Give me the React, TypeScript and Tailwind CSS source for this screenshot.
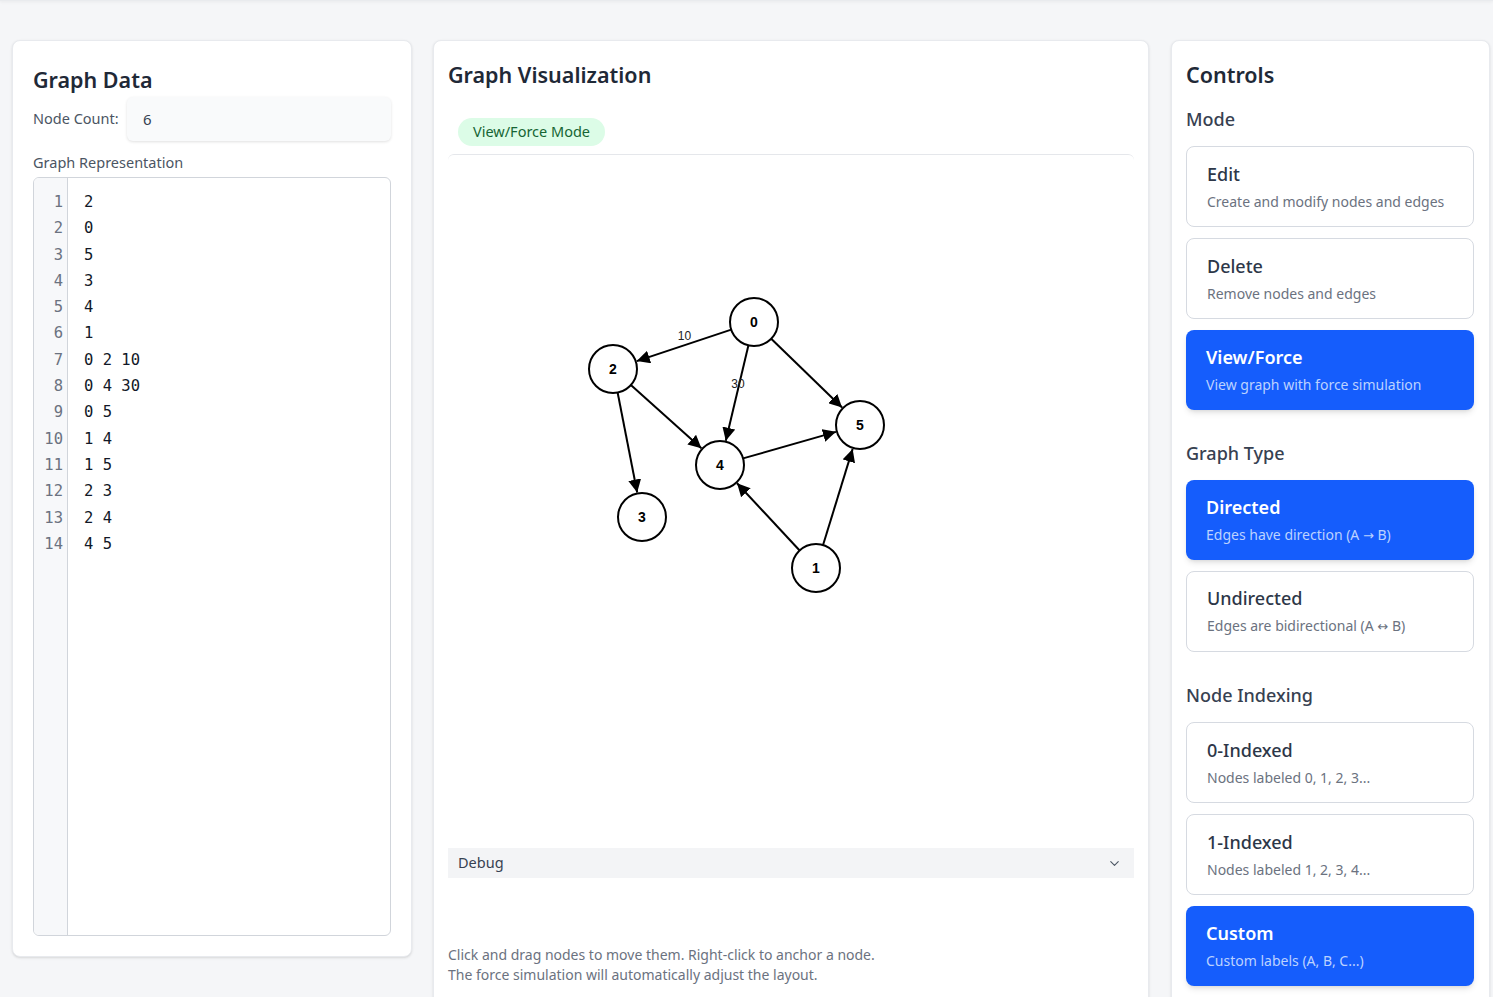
import React from "react";
import { ChevronDown } from "lucide-react";

const lines = ["2", "0", "5", "3", "4", "1", "0 2 10", "0 4 30", "0 5", "1 4", "1 5", "2 3", "2 4", "4 5"];

const nodes: Record<string, [number, number]> = {
  "0": [306, 167],
  "1": [368, 413],
  "2": [165, 214],
  "3": [194, 362],
  "4": [272, 310],
  "5": [412, 270],
};

const edges: { s: string; t: string; w?: string }[] = [
  { s: "0", t: "2", w: "10" },
  { s: "0", t: "4", w: "30" },
  { s: "0", t: "5" },
  { s: "1", t: "4" },
  { s: "1", t: "5" },
  { s: "2", t: "3" },
  { s: "2", t: "4" },
  { s: "4", t: "5" },
];

const R = 24;

function Graph() {
  return (
    <svg width="685" height="692" viewBox="0 0 685 692" className="block">
      <defs>
        <marker id="arrow" viewBox="0 0 10 10" refX="10" refY="5" markerWidth="13" markerHeight="13" markerUnits="userSpaceOnUse" orient="auto">
          <path d="M0,0 L10,5 L0,10 z" fill="#000" />
        </marker>
      </defs>
      {edges.map((e, i) => {
        const [x1, y1] = nodes[e.s];
        const [x2, y2] = nodes[e.t];
        const dx = x2 - x1;
        const dy = y2 - y1;
        const d = Math.sqrt(dx * dx + dy * dy);
        const ux = dx / d;
        const uy = dy / d;
        const sx = x1 + ux * R;
        const sy = y1 + uy * R;
        const ex = x2 - ux * (R + 1);
        const ey = y2 - uy * (R + 1);
        return (
          <g key={i}>
            <line x1={sx} y1={sy} x2={ex} y2={ey} stroke="#000" strokeWidth="2" markerEnd="url(#arrow)" />
            {e.w && (
              <text x={(x1 + x2) / 2 + 1} y={(y1 + y2) / 2 - 6} textAnchor="middle" fontSize="12" fill="#222" style={{ fontFamily: "'Liberation Sans', Arial, sans-serif" }}>
                {e.w}
              </text>
            )}
          </g>
        );
      })}
      {Object.entries(nodes).map(([id, [x, y]]) => (
        <g key={id}>
          <circle cx={x} cy={y} r={R} fill="#fff" stroke="#000" strokeWidth="2" />
          <text x={x} y={y + 5} textAnchor="middle" fontSize="14" fontWeight="bold" fill="#000" style={{ fontFamily: "'Liberation Sans', Arial, sans-serif" }}>
            {id}
          </text>
        </g>
      ))}
    </svg>
  );
}

function Desc({ text }: { text: string }) {
  const parts = text.split(/(→|↔)/);
  return (
    <>
      {parts.map((p, i) =>
        p === "→" || p === "↔" ? (
          <span key={i} style={{ fontFamily: "'DejaVu Sans', sans-serif" }} className="text-[13px]">
            {p}
          </span>
        ) : (
          <React.Fragment key={i}>{p}</React.Fragment>
        )
      )}
    </>
  );
}

function Card({ title, desc, active }: { title: string; desc: string; active?: boolean }) {
  return active ? (
    <div className="h-[80px] rounded-lg bg-[#155dfc] shadow-md px-5 flex flex-col justify-center">
      <div className="text-[18px] leading-[26px] font-semibold text-white">{title}</div>
      <div className="text-[14px] leading-[22px] text-[#bcd2ff] mt-[4px]">
        <Desc text={desc} />
      </div>
    </div>
  ) : (
    <div className="h-[81px] rounded-lg border border-[#d6dae1] bg-white px-5 flex flex-col justify-center">
      <div className="text-[18px] leading-[26px] font-medium text-[#2d3748]">{title}</div>
      <div className="text-[14px] leading-[22px] text-[#6b7280] mt-[4px]">
        <Desc text={desc} />
      </div>
    </div>
  );
}

function Section({ label, children }: { label: string; children: React.ReactNode }) {
  return (
    <div>
      <div className="text-[18px] leading-[26px] font-medium text-[#374151] mb-[14px]">{label}</div>
      <div className="flex flex-col gap-[11px]">{children}</div>
    </div>
  );
}

export default function App() {
  return (
    <div className="min-h-screen bg-[#f5f6f8] relative" style={{ fontFamily: "'Noto Sans', 'Open Sans', sans-serif" }}>
      <div className="h-px w-full bg-[#e9ebee] shadow-sm" />
      <div className="flex items-start pl-[12px] pt-[39px]">
        {/* Left panel */}
        <div className="w-[400px] h-[917px] shrink-0 rounded-lg border border-[#e8eaee] bg-white shadow-sm px-5 pt-[23px] pb-5 flex flex-col">
          <h2 className="text-[21.5px] leading-[32px] font-semibold text-[#1f2937]">Graph Data</h2>
          <div className="flex items-center mt-[1px]">
            <span className="text-[14.5px] text-[#4b5563] w-[94px]">Node Count:</span>
            <div className="flex-1 h-[44px] rounded-md bg-[#f9fafb] shadow-[0_1px_3px_rgba(0,0,0,0.12)] flex items-center px-4 text-[15px] text-[#374151]">6</div>
          </div>
          <div className="text-[14.5px] leading-[20px] text-[#4b5563] mt-[11px] mb-[5px]">Graph Representation</div>
          <div className="flex-1 flex rounded-md border border-[#d1d5db] overflow-hidden">
            <div className="w-[34px] bg-[#f7f8fa] border-r border-[#d1d5db] pt-[11px] pr-[4px] text-right text-[#6b7280] text-[15.5px] leading-[26.3px]" style={{ fontFamily: "'DejaVu Sans Mono', monospace" }}>
              {lines.map((_, i) => (
                <div key={i}>{i + 1}</div>
              ))}
            </div>
            <div className="flex-1 pt-[11px] pl-[16px] text-[#111827] text-[15.5px] leading-[26.3px]" style={{ fontFamily: "'DejaVu Sans Mono', monospace" }}>
              {lines.map((l, i) => (
                <div key={i} className="whitespace-pre">{l}</div>
              ))}
            </div>
          </div>
        </div>

        {/* Middle panel */}
        <div className="ml-[21px] w-[716px] h-[980px] shrink-0 rounded-lg border border-[#e8eaee] bg-white shadow-sm px-[14px] pt-[18px]">
          <h2 className="text-[21.5px] leading-[32px] font-semibold text-[#1f2937]">Graph Visualization</h2>
          <div className="pl-[10px] mt-[27px]">
            <span className="inline-flex items-center h-[28px] px-[15px] rounded-full bg-[#dcfce7] text-[#166534] text-[14.5px]">View/Force Mode</span>
          </div>
          <div className="mt-[8px] border-t border-[#e5e7eb] rounded-t-md h-[694px] overflow-hidden">
            <Graph />
          </div>
          <div className="h-[30px] bg-[#f3f4f6] flex items-center justify-between px-[10px]">
            <span className="text-[14.5px] text-[#374151]">Debug</span>
            <ChevronDown size={15} strokeWidth={1.75} className="text-[#4b5563] mr-[2px]" />
          </div>
          <div className="mt-[67px] text-[14px] leading-[20px] text-[#6b7280]">
            <div>Click and drag nodes to move them. Right-click to anchor a node.</div>
            <div>The force simulation will automatically adjust the layout.</div>
          </div>
        </div>

        {/* Right panel */}
        <div className="ml-[22px] w-[319px] shrink-0 rounded-lg border border-[#e8eaee] bg-white shadow-sm pl-[14px] pr-[15px] pt-[18px] pb-6 flex flex-col">
          <h2 className="text-[21.5px] leading-[32px] font-semibold text-[#1f2937]">Controls</h2>
          <div className="mt-[15px] flex flex-col gap-[30px]">
            <Section label="Mode">
              <Card title="Edit" desc="Create and modify nodes and edges" />
              <Card title="Delete" desc="Remove nodes and edges" />
              <Card title="View/Force" desc="View graph with force simulation" active />
            </Section>
            <Section label="Graph Type">
              <Card title="Directed" desc="Edges have direction (A → B)" active />
              <Card title="Undirected" desc="Edges are bidirectional (A ↔ B)" />
            </Section>
            <Section label="Node Indexing">
              <Card title="0-Indexed" desc="Nodes labeled 0, 1, 2, 3..." />
              <Card title="1-Indexed" desc="Nodes labeled 1, 2, 3, 4..." />
              <Card title="Custom" desc="Custom labels (A, B, C...)" active />
            </Section>
          </div>
        </div>
      </div>
    </div>
  );
}
